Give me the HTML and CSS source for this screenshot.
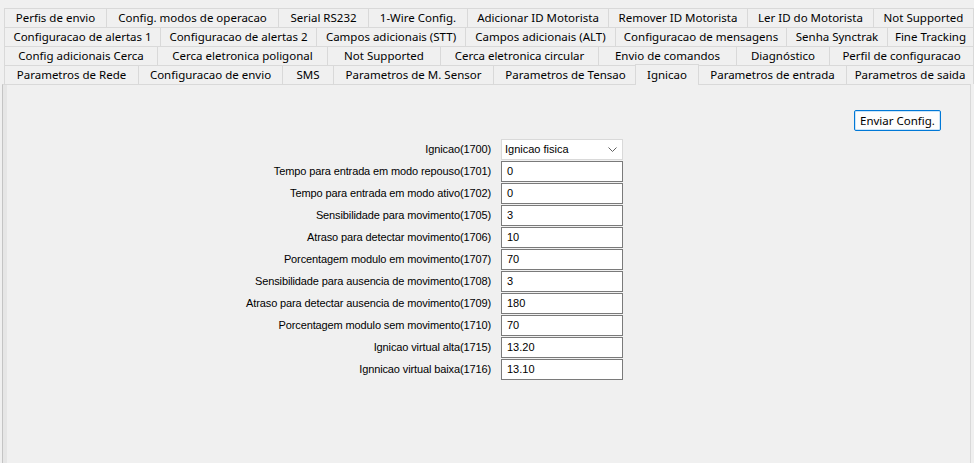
FILE: index.html
```html
<!DOCTYPE html>
<html>
<head>
<meta charset="utf-8">
<link rel="stylesheet" href="styles.css">
</head>
<body>
<div class="tabs">
  <div class="row r1">
    <div class="tab">Perfis de envio</div>
    <div class="tab">Config. modos de operacao</div>
    <div class="tab">Serial RS232</div>
    <div class="tab">1-Wire Config.</div>
    <div class="tab">Adicionar ID Motorista</div>
    <div class="tab">Remover ID Motorista</div>
    <div class="tab">Ler ID do Motorista</div>
    <div class="tab">Not Supported</div>
  </div>
  <div class="row r2">
    <div class="tab">Configuracao de alertas 1</div>
    <div class="tab">Configuracao de alertas 2</div>
    <div class="tab">Campos adicionais (STT)</div>
    <div class="tab">Campos adicionais (ALT)</div>
    <div class="tab">Configuracao de mensagens</div>
    <div class="tab">Senha Synctrak</div>
    <div class="tab">Fine Tracking</div>
  </div>
  <div class="row r3">
    <div class="tab">Config adicionais Cerca</div>
    <div class="tab">Cerca eletronica poligonal</div>
    <div class="tab">Not Supported</div>
    <div class="tab">Cerca eletronica circular</div>
    <div class="tab">Envio de comandos</div>
    <div class="tab">Diagnóstico</div>
    <div class="tab">Perfil de configuracao</div>
  </div>
  <div class="row r4">
    <div class="tab">Parametros de Rede</div>
    <div class="tab">Configuracao de envio</div>
    <div class="tab">SMS</div>
    <div class="tab">Parametros de M. Sensor</div>
    <div class="tab">Parametros de Tensao</div>
    <div class="tab sel">Ignicao</div>
    <div class="tab">Parametros de entrada</div>
    <div class="tab">Parametros de saida</div>
  </div>
</div>
<div class="panel">
  <div class="actions"><button class="btn">Enviar Config.</button></div>
  <div class="form">
    <label class="lbl">Ignicao(1700)</label>
    <div class="combo"><span>Ignicao fisica</span><svg class="chev" width="9" height="6" viewBox="0 0 9 6"><path d="M0.5 0.5 L4.5 4.5 L8.5 0.5" fill="none" stroke="#606060" stroke-width="1"/></svg></div>
    <label class="lbl">Tempo para entrada em modo repouso(1701)</label>
    <div class="field">0</div>
    <label class="lbl">Tempo para entrada em modo ativo(1702)</label>
    <div class="field">0</div>
    <label class="lbl">Sensibilidade para movimento(1705)</label>
    <div class="field">3</div>
    <label class="lbl">Atraso para detectar movimento(1706)</label>
    <div class="field">10</div>
    <label class="lbl">Porcentagem modulo em movimento(1707)</label>
    <div class="field">70</div>
    <label class="lbl">Sensibilidade para ausencia de movimento(1708)</label>
    <div class="field">3</div>
    <label class="lbl">Atraso para detectar ausencia de movimento(1709)</label>
    <div class="field">180</div>
    <label class="lbl">Porcentagem modulo sem movimento(1710)</label>
    <div class="field">70</div>
    <label class="lbl">Ignicao virtual alta(1715)</label>
    <div class="field">13.20</div>
    <label class="lbl">Ignnicao virtual baixa(1716)</label>
    <div class="field">13.10</div>
  </div>
</div>
</body>
</html>
```
FILE: styles.css
```css
html, body {
  margin: 0;
  padding: 0;
}
body {
  background: #f0f0f0;
  width: 974px;
  height: 463px;
  overflow: hidden;
  font-family: "Noto Sans", "Liberation Sans", sans-serif;
}
.tabs {
  padding: 8px 0 0 4px;
}
.row {
  display: grid;
  height: 19px;
  width: 970px;
}
.r1 { grid-template-columns: 102px 172px 90px 99px 141px 139px 126px 1fr; }
.r2 { grid-template-columns: 156px 156px 149px 150px 171px 101px 1fr; }
.r3 { grid-template-columns: 153px 170px 113px 158px 138px 93px 1fr; }
.r4 { grid-template-columns: 134px 144px 51px 160px 144px 61px 148px 1fr; }
.tab {
  box-sizing: border-box;
  border-top: 1px solid #d9d9d9;
  border-left: 1px solid #d9d9d9;
  background: #f0f0f0;
  font-size: 11.5px;
  line-height: 17px;
  text-align: center;
  white-space: nowrap;
  overflow: hidden;
  color: #000;
}
.tab:last-child {
  border-right: 1px solid #d9d9d9;
}
.tab.sel {
  position: relative;
  z-index: 2;
  margin: -1px -1px -1px -2px;
  border-right: 1px solid #d9d9d9;
  line-height: 19px;
}
.panel {
  margin-left: 2px;
  width: 969px;
  height: 400px;
  box-sizing: border-box;
  border: 1px solid #d9d9d9;
  border-left-color: #c4c4c4;
  padding: 25px 29px 0 0;
  box-shadow: inset 4px 0 0 #e6e6e6;
}
.actions {
  display: flex;
  justify-content: flex-end;
}
.btn {
  width: 87px;
  height: 21px;
  box-sizing: border-box;
  border: 1px solid #0078d7;
  border-radius: 2px;
  background: #fdfdfd;
  box-shadow: inset 0 0 0 1px #cce4f7;
  font-family: "Noto Sans", sans-serif;
  font-size: 11.5px;
  padding: 0;
  line-height: 17px;
  color: #000;
}
.form {
  margin-top: 8px;
  display: grid;
  grid-template-columns: 490px 122px;
  grid-auto-rows: 21px;
  column-gap: 8px;
  row-gap: 1px;
}
.lbl {
  font-family: "Liberation Sans", Arial, sans-serif;
  font-size: 11px;
  letter-spacing: -0.12px;
  text-align: right;
  padding-right: 2px;
  line-height: 21px;
  white-space: nowrap;
  color: #000;
}
.field {
  box-sizing: border-box;
  border: 1px solid #7a7a7a;
  background: #fff;
  font-family: "Liberation Sans", Arial, sans-serif;
  font-size: 11px;
  line-height: 19px;
  padding-left: 5px;
  color: #000;
}
.combo {
  box-sizing: border-box;
  border: 1px solid #d9d9d9;
  background: #fff;
  font-family: "Liberation Sans", Arial, sans-serif;
  font-size: 11px;
  line-height: 19px;
  padding-left: 3px;
  padding-right: 5px;
  display: flex;
  align-items: center;
  justify-content: space-between;
  color: #000;
}
.chev {
  display: block;
}
```
